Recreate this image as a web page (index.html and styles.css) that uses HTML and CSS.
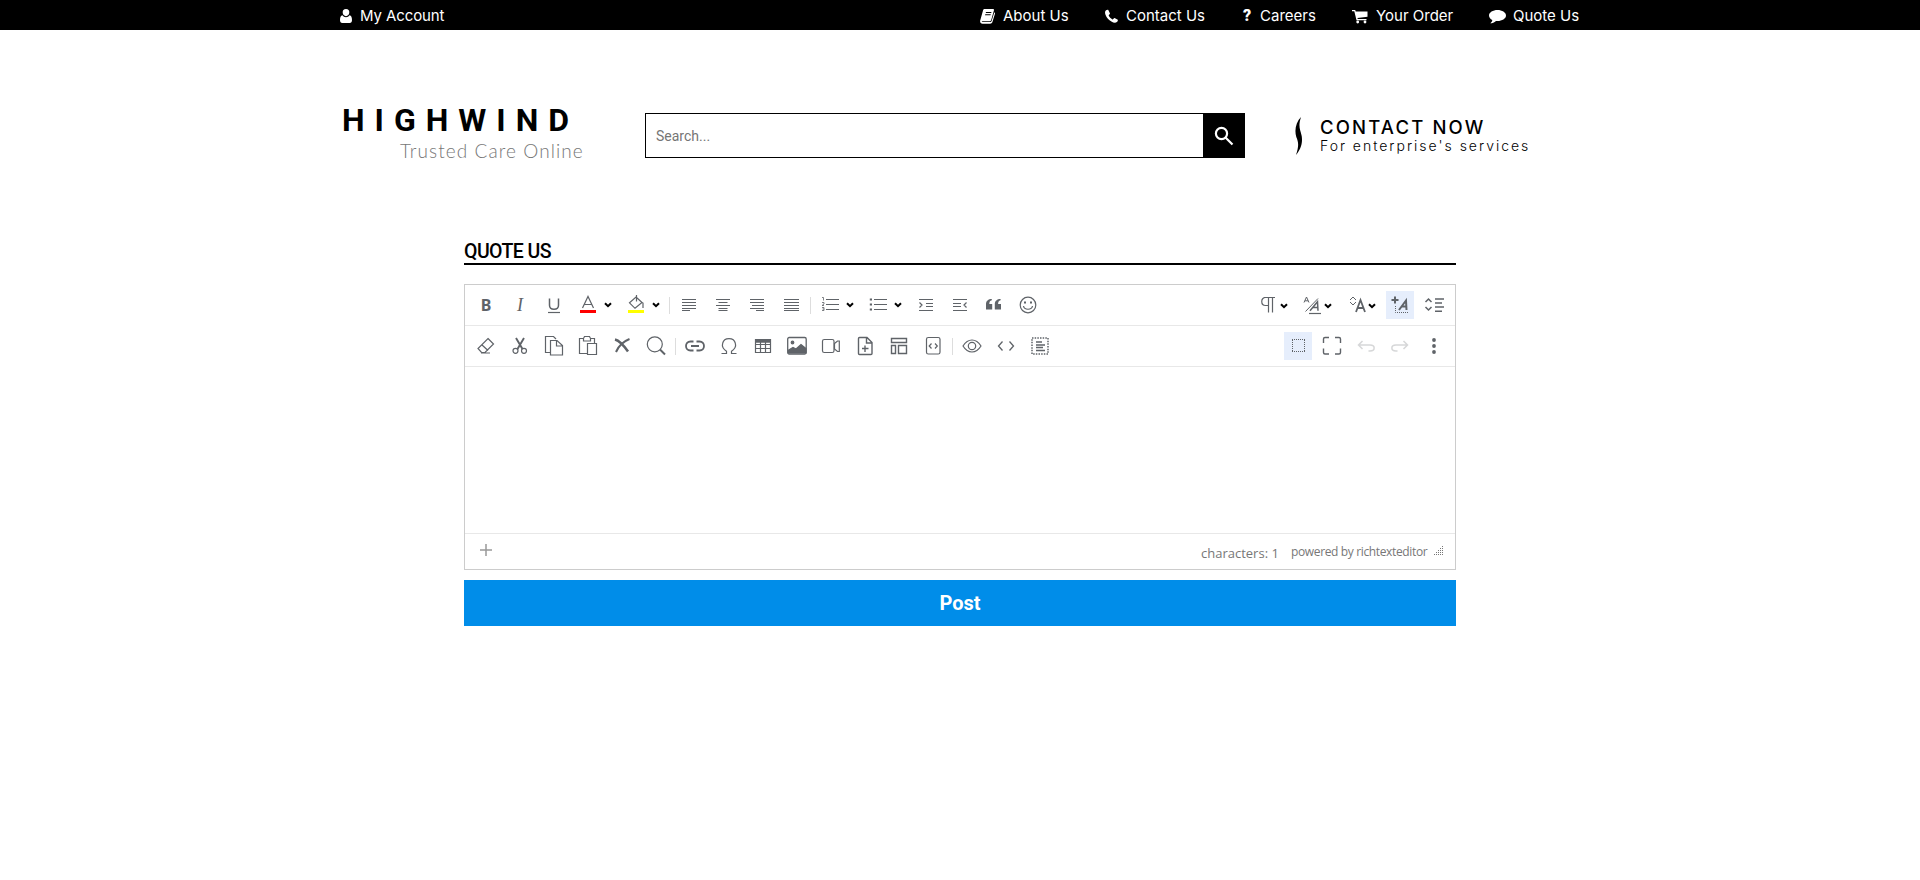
FILE: index.html
```html
<!DOCTYPE html>
<html lang="en">
<head>
<meta charset="utf-8">
<title>Highwind - Quote Us</title>
<link rel="stylesheet" href="styles.css">
</head>
<body>
<nav class="topbar">
  <a class="nav-item account"><svg width="12" height="16" viewBox="0 0 12 16"><path d="M6 1a3.4 3.4 0 0 1 3.3 3.6C9.300 6.600 7.800 8.200 6 8.200S2.700 6.600 2.700 4.600A3.400 3.400 0 0 1 6 1zM2.400 7.200C3.300 8.500 4.500 9.200 6 9.200s2.700-.7 3.600-2C11.300 7.600 12 9.400 12 12c0 1.800-.8 3-2.300 3H2.300C.8 15 0 13.800 0 12c0-2.600.7-4.400 2.400-4.800z"/></svg><span>My Account</span></a>
  <div class="nav-right">
    <a class="nav-item about"><svg width="15" height="16" viewBox="0 0 15 16"><path d="M4.500 1h8.300c1 0 1.400.7 1.100 1.600L11.200 12c-.3.8-.8 1.200-1.600 1.200H2.300c-.7 0-.7.9.2.9h7.700c.7 0 1.200-.3 1.400-1l2.700-8.800c.8.400.8 1 .6 1.700l-2.500 8c-.4 1.200-1.200 1.700-2.300 1.700H2.500C.8 15.700-.3 14.200.2 12.500L3 2.500C3.300 1.500 3.700 1 4.500 1zM6 4l-.3 1h5.500l.3-1zm-.7 2.300-.3 1h5.500l.3-1z" fill-rule="evenodd"/></svg><span>About Us</span></a>
    <a class="nav-item contact"><svg width="13" height="16" viewBox="0 0 13 16"><path d="M3.300 2 5 5.500c.2.500-1.500 1.500-1.300 2.100.8 1.600 2 2.900 3.700 3.800.6.300 1.600-1.700 2.200-1.400l3.200 1.700c.4.300-.2 1.900-.9 2.400-1.700 1-3.600.5-5.500-.7C3.800 11.800 1.600 9.600.6 6.900-.2 4.700-.2 3.300 1 2.300 1.700 1.800 3 1.500 3.300 2z"/></svg><span>Contact Us</span></a>
    <a class="nav-item careers"><b>?</b><span>Careers</span></a>
    <a class="nav-item order"><svg width="16" height="16" viewBox="0 0 16 16"><path d="M0 2h3.200l.5 1.500H15.500V8.700L5.500 10l.2 1h8.800v1.300H4.500L2.300 3.300H0z"/><circle cx="5.700" cy="14" r="1.400"/><circle cx="13" cy="14" r="1.400"/></svg><span>Your Order</span></a>
    <a class="nav-item quote"><svg width="17" height="16" viewBox="0 0 17 16"><path d="M8.500 2C13 2 17 4.400 17 7.500S13 13 8.500 13l-1.500-.1C5.300 14.500 3.400 15.200 1.300 15.300c1.200-1 1.900-2 2-3.300C1.200 11 0 9.400 0 7.500 0 4.400 4 2 8.500 2z"/></svg><span>Quote Us</span></a>
  </div>
</nav>

<header class="header">
  <div class="logo">
    <div class="logo-name">HIGHWIND</div>
    <div class="logo-tag">Trusted Care Online</div>
  </div>
  <form class="search">
    <input class="search-input" placeholder="Search...">
    <button class="search-btn" type="button" aria-label="Search"><svg width="20" height="20" viewBox="0 0 20 20" fill="none" stroke="#fff" stroke-width="2.200"><circle cx="7.500" cy="7.500" r="5.600"/><path d="m11.500 11.500 7 7"/></svg></button>
  </form>
  <div class="enterprise">
    <svg width="8" height="38" viewBox="0 0 8 38"><path d="M6 0C3 9 5 12 6.700 19 8 27 5 33 1 38 3.800 29 3.800 26 1.300 20-.8 13 1 5 6 0z"/></svg>
    <div><div class="ent-title">CONTACT NOW</div><div class="ent-sub">For enterprise's services</div></div>
  </div>
</header>

<main class="main">
  <h1 class="title">QUOTE US</h1>
  <section class="editor">
    <div class="toolbar">
      <div class="group">
        <i class="tool"><span class="g-b">B</span></i>
        <i class="tool"><span class="g-i">I</span></i>
        <i class="tool"><svg viewBox="0 0 28 28"><path d="M9.500 7.500v6.700c0 5.400 9 5.400 9 0V7.500" stroke-width="1.500"/><path d="M8 21.500h12"/></svg></i>
        <i class="tool"><svg viewBox="0 0 28 28"><path d="M8.500 17 14 5.500 19.500 17M10.300 13.500h7.400"/><path d="M6 20.500h16" stroke="#f00" stroke-width="3"/></svg></i><i class="chev"><svg viewBox="0 0 8 6"><path d="m1 1.200 3 3 3-3"/></svg></i>
        <i class="tool"><svg viewBox="0 0 28 28"><path d="m14 6 6 5.500-7 5.800-5.500-5.500zM14.500 4v6.500M19 11l2 1v5"/><path d="M6 20.500h16" stroke="#ff0" stroke-width="3"/></svg></i><i class="chev"><svg viewBox="0 0 8 6"><path d="m1 1.200 3 3 3-3"/></svg></i>
        <i class="sep"></i>
        <i class="tool"><svg viewBox="0 0 28 28"><path d="M7 8.500h14M7 11.500h14M7 14.500h14M7 17.500h14M7 19.500h8" class="lines"/></svg></i>
        <i class="tool"><svg viewBox="0 0 28 28"><path d="M7 8.500h14M9.500 11.500h9M7 14.500h14M9.500 17.500h9M9.500 19.500h9" class="lines"/></svg></i>
        <i class="tool"><svg viewBox="0 0 28 28"><path d="M7 8.500h14M7 11.500h14M9 14.500h12M7 17.500h14M13 19.500h8" class="lines"/></svg></i>
        <i class="tool"><svg viewBox="0 0 28 28"><path d="M7 8.500h15M7 11.500h15M7 14.500h15M7 17.500h15M7 19.500h15" class="lines"/></svg></i>
        <i class="sep"></i>
        <i class="tool"><svg viewBox="0 0 28 28"><path d="M10 8.500h13M10 13.500h13M10 18.500h13"/><path d="M6 6.500h1.500v3M6 11.500h2v1.500l-2 1.500h2M6 16.500h2v3H6M6.500 18H8" stroke-width=".8"/></svg></i><i class="chev"><svg viewBox="0 0 8 6"><path d="m1 1.200 3 3 3-3"/></svg></i>
        <i class="tool"><svg viewBox="0 0 28 28"><path d="M10 8.500h13M10 13.500h13M10 18.500h13"/><path d="M5.800 8.500h2.200M5.800 13.500h2.200M5.800 18.500h2.200" stroke-width="2"/></svg></i><i class="chev"><svg viewBox="0 0 8 6"><path d="m1 1.200 3 3 3-3"/></svg></i>
        <i class="tool"><svg viewBox="0 0 28 28"><path d="M7 8.500h14M14 12.500h7M14 15.500h7M7 19.500h14M7.500 11.500 10 14l-2.500 2.500"/></svg></i>
        <i class="tool"><svg viewBox="0 0 28 28"><path d="M7 8.500h14M7 12.500h8M7 15.500h8M7 19.500h14M20.500 11.500 18 14l2.500 2.500"/></svg></i>
        <i class="tool"><svg viewBox="0 0 28 28"><g fill="#5f6368" stroke="none"><path d="M11.800 8v1.200C9.800 9.700 9.300 11 9.300 13h2.900v5.500H6v-5.500C6 10 8.300 8 11.800 8zM20.600 8v1.200c-2 .5-2.500 1.800-2.500 3.800H21v5.500h-6.200v-5.500c0-3 2.300-5 5.800-5z"/></g></svg></i>
        <i class="tool"><svg viewBox="0 0 28 28"><circle cx="14" cy="14" r="7.800"/><path d="M9.500 15c.8 4.300 8.200 4.300 9 0"/><path d="M10 11.500h2M16 11.500h2" stroke-width="2"/></svg></i>
      </div>
      <div class="group">
        <i class="wide"><svg viewBox="0 0 44 28"><path d="M13 6.500h11M17.500 6.500v15M21.500 6.500v15M17 14.500h-2.500c-5 0-5-8 0-8"/><path class="dark" d="m30 13.200 3 3 3-3"/></svg></i>
        <i class="wide"><svg viewBox="0 0 44 28"><path d="m9 11.500 2.500-5.500 2.500 5.500M10 9.800h3" stroke-width="1"/><path d="M10.500 20.500 23 7.500" stroke-width="1"/><path d="m15 19.800 7.500-9 .5 9M18 16.500h5" stroke-width="1.500"/><path d="M14 22.500h12"/><path class="dark" d="m30 13.200 3 3 3-3"/></svg></i>
        <i class="wide"><svg viewBox="0 0 44 28"><path d="m11 9 3-3 3 3M11 11l3 3 3-3" stroke-width="1"/><path d="m17 21 4.500-12 4.500 12M18.500 17h6" stroke-width="1.800"/><path class="dark" d="m30 13.200 3 3 3-3"/></svg></i>
        <i class="tool on"><svg viewBox="0 0 28 28"><path d="M5.500 9h7M9 5.500v7" stroke-width="2"/><path d="m13 19 7-9.500.5 9.500M15.500 15.500h5" stroke-width="2"/><path d="M9.500 15v6.500H22" class="dots"/></svg></i>
        <i class="tool"><svg viewBox="0 0 28 28"><path d="m5.500 11 3-3 3 3M5.500 16l3 3 3-3" stroke-width="1.500"/><path d="M15 8h9M15 12h7M15 16h9M15 20.300h7" stroke-width="1.400"/></svg></i>
      </div>
    </div>
    <div class="toolbar">
      <div class="group">
        <i class="tool"><svg viewBox="0 0 28 28"><path d="m16 6.500 5.500 5.500-8.500 8.500H9.500l-3.500-4zM9.500 12.500l6.500 6M9 21h9"/></svg></i>
        <i class="tool"><svg viewBox="0 0 28 28"><circle cx="9.500" cy="18.800" r="2.500"/><circle cx="18" cy="18.800" r="2.500"/><path d="m10 6 6.500 11M18 6l-6.500 11" stroke-width="1.900"/></svg></i>
        <i class="tool"><svg viewBox="0 0 28 28"><path d="M10 20.500H5.500v-16h8l2.500 2.500M10.500 8.500h6.500l5.500 5v9.500h-12zM16.500 8.500v5.500h6"/></svg></i>
        <i class="tool"><svg viewBox="0 0 28 28"><path d="M13 21.500H5.500v-15h4l1-2h5l1 2h4v5M9.500 6v3h7V6M13.500 11.500h9v11h-9z"/></svg></i>
        <i class="tool"><svg viewBox="0 0 28 28"><path d="M7 7.500c4 1 9.500 7 13 12" stroke-width="2.500"/><path d="M21.500 7C16.500 9 10.500 14 8 20" stroke-width="2"/></svg></i>
        <i class="tool"><svg viewBox="0 0 28 28"><circle cx="12.800" cy="12.300" r="7.500"/><path d="m18 17.500 5 5" stroke-width="2"/></svg></i>
        <i class="sep"></i>
        <i class="tool"><svg viewBox="0 0 28 28"><path d="M12.500 9.500H9.500c-6 0-6 9 0 9h3M15.500 9.500h3c6 0 6 9 0 9h-3M10 14h8" stroke-width="1.800"/></svg></i>
        <i class="tool"><svg viewBox="0 0 28 28"><path d="M6.500 21.500h5v-2.300c-3.300-2.200-4.700-4.700-3.900-7.700 1.500-6.500 11.300-6.500 12.800 0 .8 3-.6 5.500-3.900 7.700v2.300h5"/></svg></i>
        <i class="tool"><svg viewBox="0 0 28 28"><path d="M6.500 7.500h15v13h-15zM6.500 12.500h15M6.500 16.500h15M11.500 8v12.500M16.500 8v12.500"/><path d="M6 9h16" stroke-width="3.500"/></svg></i>
        <i class="tool"><svg viewBox="0 0 28 28"><rect x="4.700" y="5.500" width="18.500" height="16.500" rx="1.500" stroke-width="1.300"/><circle cx="9.500" cy="10.500" r="1.300" fill="#5f6368"/><path d="m5.500 21 .1-3 4.400-2.500 3 1.500 5-4.500 5 4v4.500z" fill="#5f6368"/></svg></i>
        <i class="tool"><svg viewBox="0 0 28 28"><rect x="5.500" y="7.500" width="11.500" height="13" rx="1.800"/><path d="m17.500 11.500 3-2.500h1.800v10.500h-1.800l-3-2.500z"/></svg></i>
        <i class="tool"><svg viewBox="0 0 28 28"><path d="M8.500 5.500h7.500l5 5v11a1 1 0 0 1-1 1H8.500a1 1 0 0 1-1-1v-15a1 1 0 0 1 1-1zM15.500 5.500v5.500H21M14 13.500v6.500M11 16.500h6.500" stroke-width="1.400"/></svg></i>
        <i class="tool"><svg viewBox="0 0 28 28"><path d="M6.500 6.500h15v4h-15zM6.500 13.500h4v8h-4zM13.500 13.500h8v8h-8z" stroke-width="1.400"/></svg></i>
        <i class="tool"><svg viewBox="0 0 28 28"><rect x="7.500" y="5.500" width="13.500" height="16.500" rx="1.800"/><path d="m12.500 11.500-2.300 2.500 2.300 2.500M16 11.500l2.300 2.500-2.300 2.500"/></svg></i>
        <i class="sep"></i>
        <i class="tool"><svg viewBox="0 0 28 28"><path d="M5 14c5-8 13-8 18 0-5 8-13 8-18 0z"/><circle cx="14" cy="14" r="3.700"/></svg></i>
        <i class="tool"><svg viewBox="0 0 28 28"><path d="M10.500 9.500 6.500 14l4 4.500M17.500 9.500l4 4.500-4 4.500" stroke-width="1.300"/></svg></i>
        <i class="tool"><svg viewBox="0 0 28 28"><rect x="6" y="6" width="16" height="16" stroke-width="1.500" stroke-dasharray="1.500 1.167"/><path d="M10 10h6M10 13h9M10 15.500h7M10 18.500h9" stroke-width="1.500"/></svg></i>
      </div>
      <div class="group">
        <i class="tool on"><svg viewBox="0 0 28 28"><path d="M8 7.500h13M8 19.500h13M8.500 8v12M20.500 8v12" class="dots"/></svg></i>
        <i class="tool"><svg viewBox="0 0 28 28"><path d="M5.500 11V7q0-1.500 1.500-1.500h4M17 5.500h4q1.500 0 1.500 1.500v4M22.500 16.500v4q0 1.500-1.500 1.500h-4M11 22H7q-1.500 0-1.500-1.500v-4" stroke-width="1.400"/></svg></i>
        <i class="tool off"><svg viewBox="0 0 28 28"><path d="m10.500 9-4 4 4 4M6.500 13H18c5.500 0 5.500 6 0 6h-1.500" stroke-width="1.500"/></svg></i>
        <i class="tool off"><svg viewBox="0 0 28 28"><path d="m17.500 9 4 4-4 4M21.500 13H10c-5.500 0-5.500 6 0 6h1.500" stroke-width="1.500"/></svg></i>
        <i class="tool"><svg viewBox="0 0 28 28"><g fill="#5f6368" stroke="none"><circle cx="14" cy="8" r="1.900"/><circle cx="14" cy="14" r="1.900"/><circle cx="14" cy="20" r="1.900"/></g></svg></i>
      </div>
    </div>
    <div class="canvas"></div>
    <footer class="status">
      <svg class="plus" width="12" height="12" viewBox="0 0 12 12"><path d="M6 0v12M0 6h12"/></svg>
      <span class="chars">characters: 1</span>
      <span class="powered">powered by richtexteditor</span>
      <svg class="grip" width="9" height="9" viewBox="0 0 9 9"><path d="M8.500 0v9M6.500 2v7M4.500 4v5M2.500 6v3M.5 8v1"/></svg>
    </footer>
  </section>
  <button class="post" type="button">Post</button>
</main>
</body>
</html>
```
FILE: styles.css
```css
* { box-sizing: border-box; }
body { margin: 0; background: #fff; color: #000; font-family: Roboto, sans-serif; }
svg { display: block; flex: none; }

.topbar { height: 30px; padding: 0 340px; background: #000; color: #fff; display: flex; justify-content: space-between; }
.nav-right { display: flex; }
.nav-item { display: flex; align-items: center; gap: 8px; height: 31px; font: 15px/30px Inter, sans-serif; letter-spacing: 0; white-space: nowrap; }
.nav-item svg { fill: #fff; }
.nav-item b { width: 9px; font: 900 16px/30px Roboto, sans-serif; }
.account { letter-spacing: -.1px; }
.about { width: 125px; }
.contact { width: 138px; }
.careers { width: 109px; gap: 8px; }
.order { width: 137px; }
.quote { width: 91px; gap: 7px; }

.header { display: flex; padding: 74px 340px 0; height: 200px; }
.logo { width: 305px; padding-left: 2px; }
.logo-name { font-size: 32px; line-height: 32px; font-weight: 700; letter-spacing: 10px; }
.logo-tag { padding-left: 58px; font: 300 19px/24px Lato, sans-serif; letter-spacing: 1.080px; color: #777; margin-top: 3px; white-space: nowrap; }
.search { display: flex; width: 600px; height: 45px; margin-top: 9px; border: 1px solid #000; }
.search-input { flex: 1; border: 0; padding: 0 10px; font: 14px Roboto, sans-serif; outline: 0; }
.search-input::placeholder { color: #757575; }
.search-btn { width: 41px; border: 0; background: #000; display: flex; align-items: center; justify-content: center; padding: 0; }
.enterprise { display: flex; gap: 17px; padding: 13px 0 0 50px; white-space: nowrap; }
.ent-title { font: 500 18.500px/20px Inter, sans-serif; letter-spacing: 2.150px; }
.ent-sub { font: 300 14px/17px Inter, sans-serif; letter-spacing: 1.980px; }

.main { width: 992px; margin: 10px auto 0; }
.title { margin: 0 0 19px; height: 25px; border-bottom: 2px solid #000; font-size: 19.500px; line-height: 23px; font-weight: 500; letter-spacing: -.55px; }
.editor { height: 286px; border: 1px solid #ccc; display: flex; flex-direction: column; }
.toolbar { height: 41px; padding: 0 4px; border-bottom: 1px solid #e8e8e8; display: flex; justify-content: space-between; align-items: center; }
.group { display: flex; align-items: center; }
.group svg { fill: none; stroke: #5f6368; stroke-width: 1.200; }
.group .lines { stroke-width: 1; }
.group .dots { stroke-width: 1; stroke-dasharray: 1 1; }
.tool { width: 28px; height: 28px; margin: 0 3px; font-style: normal; color: #5f6368; text-align: center; }
.tool svg { width: 28px; height: 28px; }
.wide, .wide svg { width: 44px; height: 28px; }
.on { background: #e6eefc; }
.off { opacity: .25; }
.g-b { font: 700 16px/28px "Noto Sans", sans-serif; }
.g-i { font: italic 18px/28px "Liberation Serif", serif; }
.chev { width: 14px; }
.chev svg { width: 8px; height: 6px; margin-left: -1px; stroke: #000; stroke-width: 2; }
.group .dark { stroke: #000; stroke-width: 2; }
.sep { width: 1px; height: 17px; margin: 0 2px; background: #ddd; }
.canvas { flex: 1; border-bottom: 1px solid #e8e8e8; }
.status { height: 35px; display: flex; padding: 0 12px 0 15px; color: #777; font-family: "Open Sans", sans-serif; white-space: nowrap; }
.plus { margin-top: 10px; stroke: #999; stroke-width: 1.500; }
.chars { margin-left: auto; width: 90px; font-size: 13px; line-height: 38px; }
.powered { width: 143px; font-size: 12px; line-height: 36px; letter-spacing: -.36px; }
.grip { margin-top: 12px; stroke: #777; stroke-dasharray: 1 1; }
.post { display: block; width: 100%; height: 46px; margin-top: 10px; padding: 0; border: 0; background: #008de9; color: #fff; font: 700 20px Roboto, sans-serif; }
```
